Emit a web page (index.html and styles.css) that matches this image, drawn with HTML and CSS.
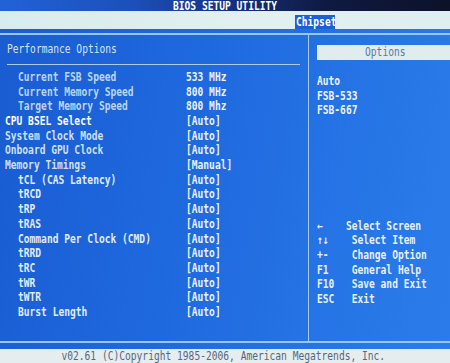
FILE: index.html
```html
<!DOCTYPE html>
<html>
<head>
<meta charset="utf-8">
<title>BIOS Setup Utility</title>
<link rel="stylesheet" href="styles.css">
</head>
<body>
<div class="screen">
  <div class="title"><span class="tx c">BIOS SETUP UTILITY</span></div>
  <div class="menubar"><span class="tab"><span class="tx">Chipset</span></span></div>
  <div class="main">
    <div class="frame">
      <div class="left">
        <div class="heading"><span class="tx">Performance Options</span></div>
        <div class="rule"></div>
        <div class="rows">
          <div class="row info"><span class="tx lab ind">Current FSB Speed</span><span class="tx val">533 MHz</span></div>
          <div class="row info"><span class="tx lab ind">Current Memory Speed</span><span class="tx val">800 MHz</span></div>
          <div class="row info"><span class="tx lab ind">Target Memory Speed</span><span class="tx val">800 Mhz</span></div>
          <div class="row sel"><span class="tx lab">CPU BSEL Select</span><span class="tx val">[Auto]</span></div>
          <div class="row"><span class="tx lab">System Clock Mode</span><span class="tx val">[Auto]</span></div>
          <div class="row"><span class="tx lab">Onboard GPU Clock</span><span class="tx val">[Auto]</span></div>
          <div class="row"><span class="tx lab">Memory Timings</span><span class="tx val">[Manual]</span></div>
          <div class="row sub"><span class="tx lab ind">tCL (CAS Latency)</span><span class="tx val">[Auto]</span></div>
          <div class="row sub"><span class="tx lab ind">tRCD</span><span class="tx val">[Auto]</span></div>
          <div class="row sub"><span class="tx lab ind">tRP</span><span class="tx val">[Auto]</span></div>
          <div class="row sub"><span class="tx lab ind">tRAS</span><span class="tx val">[Auto]</span></div>
          <div class="row sub"><span class="tx lab ind">Command Per Clock (CMD)</span><span class="tx val">[Auto]</span></div>
          <div class="row sub"><span class="tx lab ind">tRRD</span><span class="tx val">[Auto]</span></div>
          <div class="row sub"><span class="tx lab ind">tRC</span><span class="tx val">[Auto]</span></div>
          <div class="row sub"><span class="tx lab ind">tWR</span><span class="tx val">[Auto]</span></div>
          <div class="row sub"><span class="tx lab ind">tWTR</span><span class="tx val">[Auto]</span></div>
          <div class="row sub"><span class="tx lab ind">Burst Length</span><span class="tx val">[Auto]</span></div>
        </div>
      </div>
      <div class="right">
        <div class="opthead"><span class="tx c">Options</span></div>
        <div class="opts">
          <div class="opt"><span class="tx">Auto</span></div>
          <div class="opt"><span class="tx">FSB-533</span></div>
          <div class="opt"><span class="tx">FSB-667</span></div>
        </div>
        <div class="keys">
          <div class="key"><span class="tx">←    Select Screen</span></div>
          <div class="key"><span class="tx">↑↓    Select Item</span></div>
          <div class="key"><span class="tx">+-    Change Option</span></div>
          <div class="key"><span class="tx">F1    General Help</span></div>
          <div class="key"><span class="tx">F10   Save and Exit</span></div>
          <div class="key"><span class="tx">ESC   Exit</span></div>
        </div>
      </div>
    </div>
  </div>
  <div class="footer"><span class="tx c">v02.61 (C)Copyright 1985-2006, American Megatrends, Inc.</span></div>
</div>
</body>
</html>
```

FILE: styles.css
```css
* {
  box-sizing: border-box;
  margin: 0;
  padding: 0;
}

html, body {
  width: 450px;
  height: 363px;
  overflow: hidden;
}

body {
  background: #1e66dc;
  font-family: "DejaVu Sans Mono", "Liberation Mono", monospace;
  font-weight: bold;
  font-size: 12px;
}

.screen {
  width: 450px;
  height: 363px;
  display: flex;
  flex-direction: column;
}

.tx {
  display: inline-block;
  white-space: pre;
  transform: scaleX(0.8);
  transform-origin: 0 50%;
}

.tx.c {
  transform-origin: 50% 50%;
}

.title {
  height: 11px;
  flex: none;
  line-height: 13px;
  text-align: center;
  color: #ffffff;
  background: linear-gradient(90deg, #2163d6 0%, #1c4fb9 30%, #15307c 52%, #0f1a42 72%, #0d1228 100%);
}

.menubar {
  height: 18px;
  flex: none;
  background: linear-gradient(90deg, #d9eced 0%, #e3f0f0 60%, #dfeef0 100%);
  display: flex;
  align-items: flex-end;
  padding-left: 295px;
}

.tab {
  width: 40px;
  height: 14px;
  line-height: 14px;
  padding-left: 1px;
  background: #1d60d4;
  color: #ffffff;
}

.main {
  height: 320px;
  flex: none;
  padding-top: 4px;
  background: linear-gradient(100deg, #1a5cd2 0%, #1f6adf 45%, #2776e6 80%, #2b7cea 100%);
}

.frame {
  height: 310px;
  border-top: 2px solid #9cc6f2;
  border-bottom: 2px solid #9cc6f2;
  display: flex;
}

.left {
  width: 309px;
  flex: none;
  border-right: 1px solid #a2caf4;
  padding-top: 7px;
}

.heading {
  height: 14.7px;
  line-height: 14.7px;
  padding-left: 7px;
  color: #d4e4f8;
  font-weight: normal;
}

.rule {
  height: 1px;
  margin: 7.3px 8px 0 7px;
  background: #a8ccf2;
}

.rows {
  margin-top: 5px;
}

.row {
  display: grid;
  grid-template-columns: 186px auto;
  height: 14.7px;
  line-height: 14.7px;
  color: #cfe0f6;
}

.lab {
  margin-left: 5px;
}

.lab.ind {
  margin-left: 18px;
}

.val {
  color: #eaf2fc;
}

.row.info .lab {
  color: #bcd6f4;
}

.row.sel .lab {
  color: #ffffff;
}

.row.sub .lab {
  color: #e2ecfa;
}

.right {
  flex: 1;
  padding: 10px 7px 0 8px;
}

.opthead {
  height: 15px;
  line-height: 15px;
  text-align: center;
  background: #e0ecee;
  color: #5a7aa8;
  font-weight: normal;
}

.opts {
  margin-top: 14px;
  color: #edf4fc;
}

.opt,
.key {
  height: 14.6px;
  line-height: 14.6px;
}

.keys {
  margin-top: 101px;
  color: #e8f0fc;
}

.footer {
  height: 14px;
  flex: none;
  line-height: 14px;
  text-align: center;
  padding-right: 3px;
  background: #e5edef;
  color: #56667f;
  font-weight: normal;
}
```
